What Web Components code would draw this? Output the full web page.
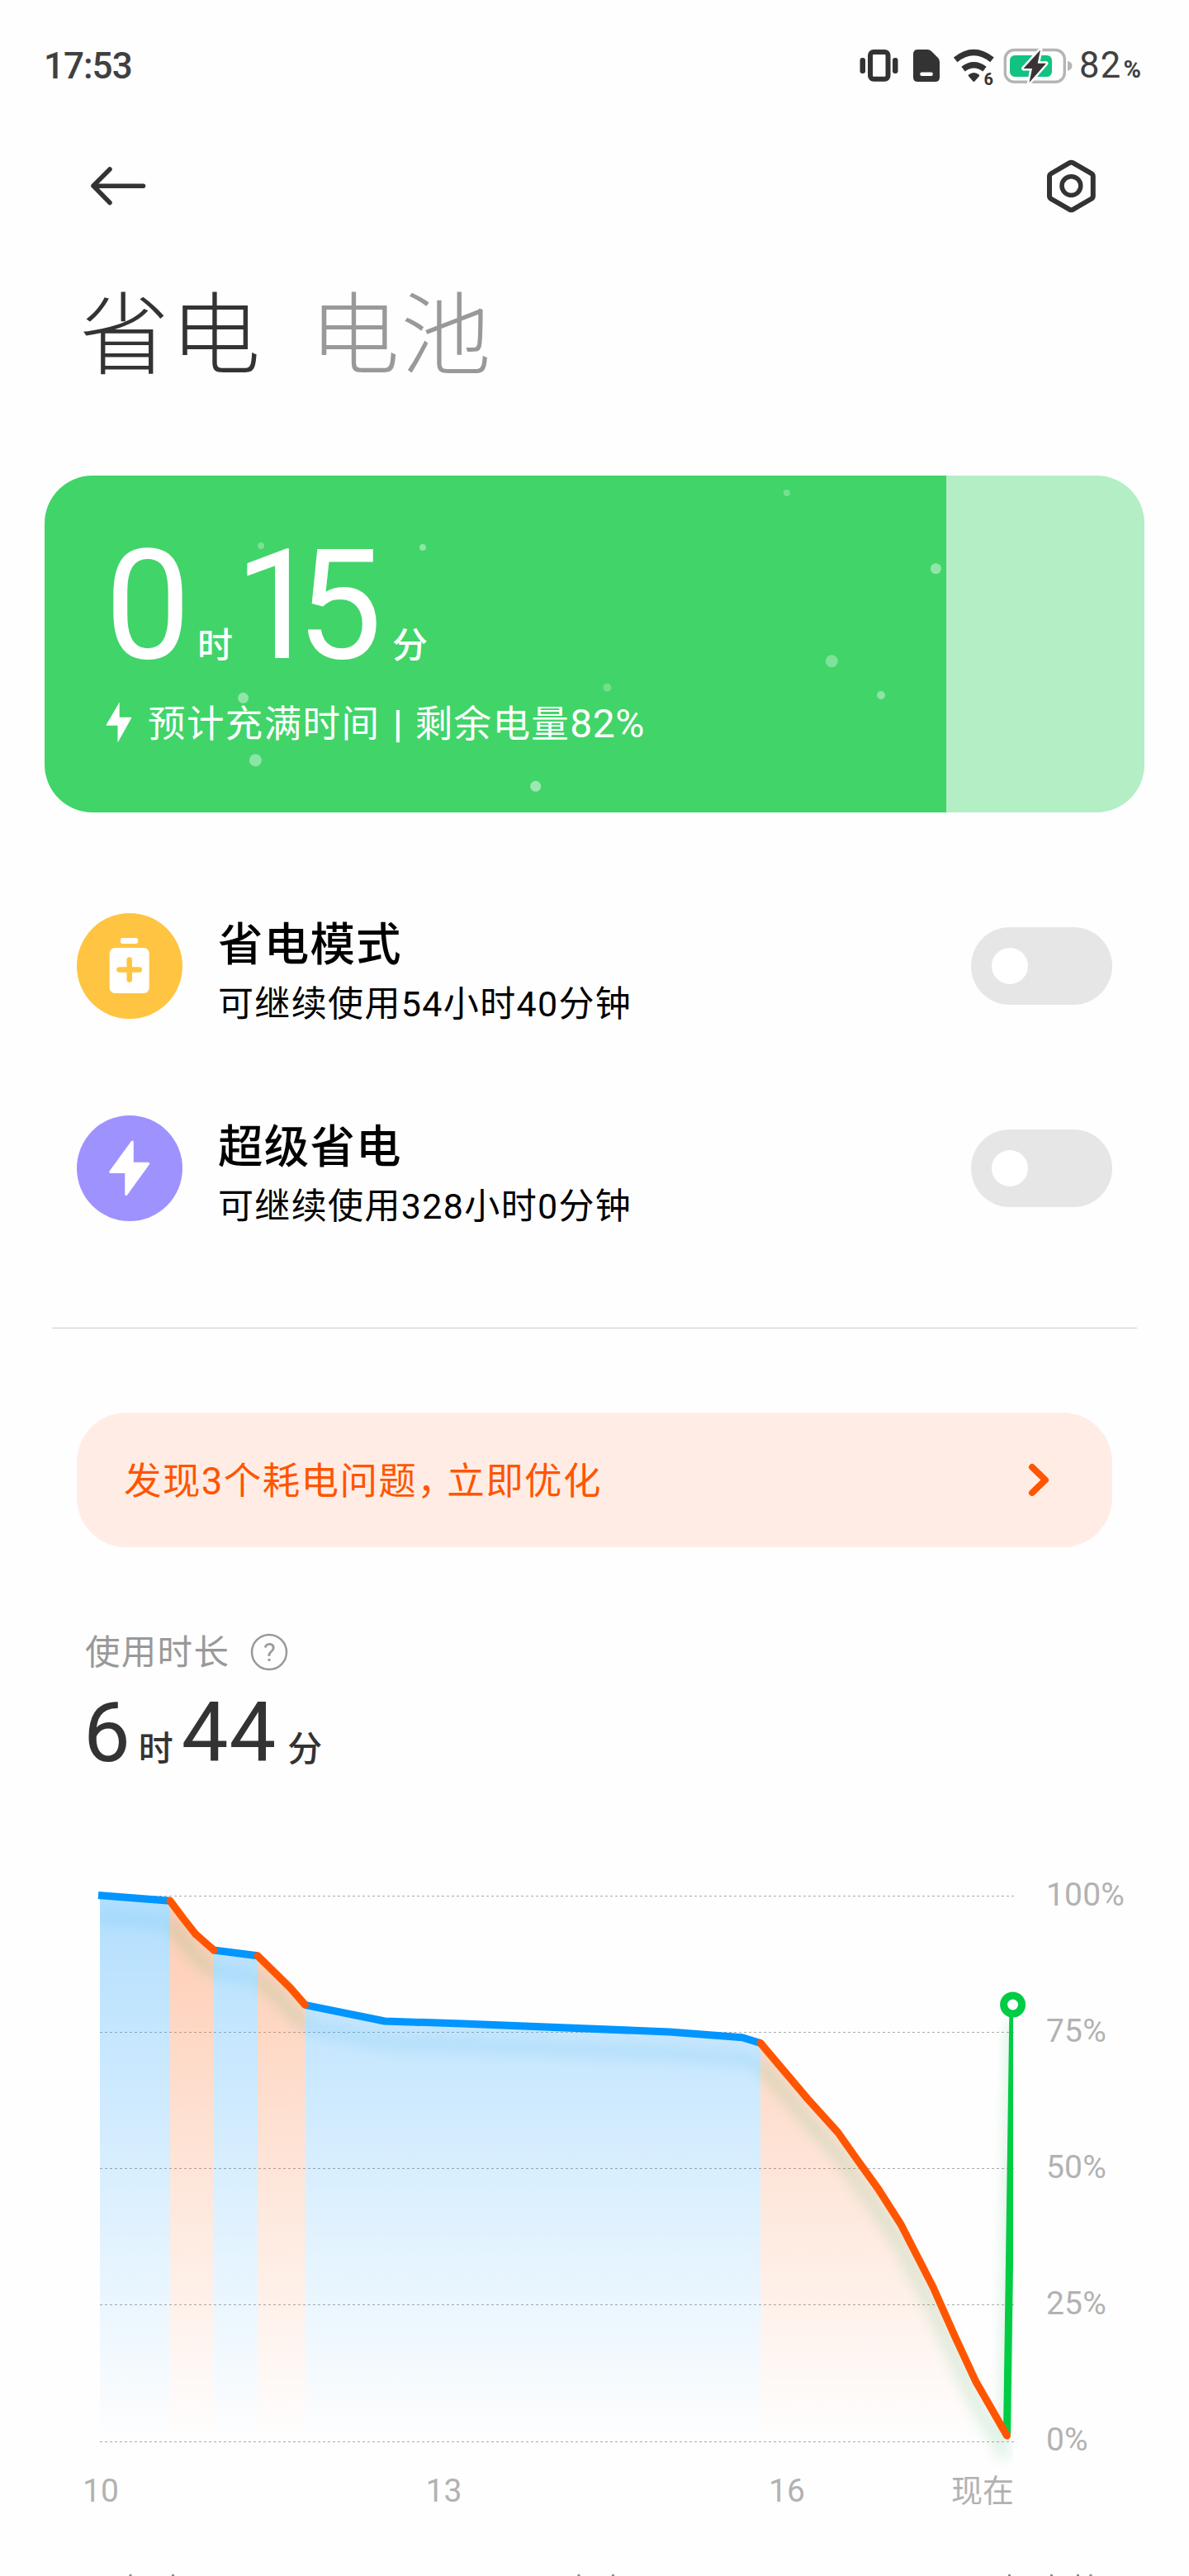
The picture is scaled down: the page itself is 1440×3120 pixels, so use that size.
<!DOCTYPE html>
<html lang="zh-CN">
<head>
<meta charset="UTF-8">
<title>省电</title>
<style>
    body {
        margin: 0;
        background: #fefefe;
        color: #333;
        font-family: Roboto, "Noto Sans CJK SC", sans-serif;
    }
</style>
</head>
<body>
<battery-page></battery-page>

<script>
// Small base class: each element only declares its markup
class BaseElement extends HTMLElement {
    constructor() {
        super();
        this.attachShadow({ mode: 'open' });
    }

    connectedCallback() {
        this.shadowRoot.innerHTML = this.template();
    }
}

class StatusBar extends BaseElement {
    template() {
        return `
            <style>
                :host {
                    display: flex;
                    justify-content: space-between;
                    align-items: center;
                    height: 159px;
                    padding: 0 58px 0 53px;
                }
                .time { font-size: 44px; font-weight: 500; line-height: 60px; letter-spacing: -1px; color: #404040; }
                .icons { display: flex; align-items: center; height: 60px; }
                svg { display: block; }
                .sim { margin-left: 18px; }
                .wifi { margin-left: 17px; }
                .battery { margin-left: 9px; }
                .level { display: flex; align-items: baseline; margin-left: 8px; font-size: 43.500px; line-height: 60px; letter-spacing: 1.300px; color: #404040; }
                .level small { margin-left: 2px; font-size: 29px; line-height: 40px; font-weight: 700; letter-spacing: 0; }
            </style>
            <span class="time">${this.getAttribute('time')}</span>
            <div class="icons">
                <svg width="47" height="46" viewBox="1039 56 47 46" fill="#333">
                    <rect x="1052" y="62" width="21.5" height="32.7" rx="4" fill="none" stroke="#333" stroke-width="6"/>
                    <rect x="1039.5" y="69" width="6.5" height="19" rx="3"/>
                    <rect x="1079" y="69" width="6.5" height="19" rx="3"/>
                </svg>
                <svg class="sim" width="32" height="46" viewBox="1104 56 32 46">
                    <path fill="#333" d="M1109.500 59H1121q3 0 5 2l8 8q2 2 2 5v18.500q0 5.500-5.500 5.500h-21q-5.500 0-5.500-5.500v-28q0-5.500 5.500-5.500z"/>
                    <rect x="1112.300" y="86.500" width="15.500" height="4.500" rx="2" fill="#fff"/>
                </svg>
                <svg class="wifi" width="51" height="60" viewBox="1153 49 51 60">
                    <g fill="none" stroke="#333" stroke-width="7.200">
                        <path d="M1155.200 71.400Q1177.300 53.600 1199.500 71.400"/>
                        <path d="M1164.500 82.600Q1177.500 72.800 1190.500 82.600"/>
                    </g>
                    <path fill="#333" d="M1171 89.500q6.400-5 12.900 0q.6 1-.2 2l-5 5.800q-1.300 1.200-2.500 0l-5-5.800q-.8-1-.2-2z"/>
                    <text x="1189.600" y="101.600" font-size="20" font-weight="700" fill="#333">6</text>
                </svg>
                <svg class="battery" width="84" height="46" viewBox="1213 56 84 46">
                    <rect x="1215.300" y="59.500" width="72" height="38.700" rx="11" fill="none" stroke="#b5b5b5" stroke-width="3.400"/>
                    <path fill="#b5b5b5" d="M1291 72.700q5.500 1.500 5.500 6t-5.500 6z"/>
                    <rect x="1221" y="66" width="51" height="26" rx="6" fill="#12c281"/>
                    <path d="M1258 59.500L1237.500 82H1248L1244.500 99L1265 75.700H1254.700z" fill="#3a3335" stroke="#fff" stroke-width="5" stroke-linejoin="round" paint-order="stroke"/>
                </svg>
                <span class="level">${this.getAttribute('level')}<small>%</small></span>
            </div>
        `;
    }
}

class NavBar extends BaseElement {
    template() {
        return `
            <style>
                :host {
                    display: flex;
                    justify-content: space-between;
                    align-items: center;
                    height: 131px;
                    padding: 0 109px 0 108px;
                }
                svg { display: block; fill: none; stroke: #333; }
            </style>
            <svg width="70" height="50" viewBox="108 200 70 50" stroke-width="5.500" stroke-linecap="round" stroke-linejoin="round">
                <path d="M133 205L113 225L133 245.500M113 225.300H173.500"/>
            </svg>
            <svg width="68" height="68" viewBox="1263 190.500 68 68" stroke-width="6" stroke-linejoin="round">
                <path d="M1295.500 196.700q1.900-1 3.800 0l22.500 13q2 1.200 2 3.500v23.600q0 2.300-2 3.500l-22.500 13q-1.900 1-3.800 0l-22.500-13q-2-1.200-2-3.500v-23.600q0-2.300 2-3.500z"/>
                <circle cx="1297.400" cy="224.600" r="11.400" stroke-width="5.500"/>
            </svg>
        `;
    }
}

class TabTitle extends BaseElement {
    template() {
        return `
            <style>
                :host {
                    display: flex;
                    gap: 58px;
                    height: 286px;
                    padding-left: 96px;
                    box-sizing: border-box;
                    font-size: 109px;
                    font-weight: 300;
                    line-height: 237px;
                    letter-spacing: 1.500px;
                }
                ::slotted(:not([active])) { color: #999; }
            </style>
            <slot></slot>
        `;
    }
}

class ChargeCard extends BaseElement {
    template() {
        // Floating bubbles: x, y, radius, opacity
        const bubbles = [
            [262, 85, 4, .3], [458, 87, 4, .4], [681.4, 256.7, 5, .25], [240.6, 269.3, 6.500, .42],
            [255.4, 344.7, 7.500, .4], [594.7, 376.3, 6.500, .48], [898.8, 21, 4, .28],
            [1079.4, 112.7, 6.500, .42], [953.3, 224.7, 7.500, .33], [1013, 266, 5, .4]
        ];
        return `
            <style>
                :host {
                    display: block;
                    position: relative;
                    box-sizing: border-box;
                    height: 408px;
                    margin: 0 54px;
                    padding: 65px 0 0 73px;
                    border-radius: 58px;
                    color: #fff;
                    background: linear-gradient(to right, #41d469 ${this.getAttribute('level')}%, #b3eec5 0);
                }
                .bubbles { position: absolute; inset: 0; }
                .time { display: flex; align-items: baseline; height: 185px; line-height: 185px; font-size: 185px; }
                .time span { font-size: 43px; font-weight: 500; }
                .hour { margin: 0 2px 0 8px; }
                .minute { margin-left: 12px; }
                .one { font-style: normal; letter-spacing: -29px; }
                .info { display: flex; align-items: center; gap: 20px; height: 60px; margin-top: 21px; line-height: 60px; font-size: 45.500px; letter-spacing: 1.400px; }
                .info svg { display: block; margin-top: -4px; }
                .info b { margin: 0 1px 0 3px; font-weight: 700; }
                .info .percent { font-size: 48px; letter-spacing: 0.500px; }
            </style>
            <svg class="bubbles" width="1332" height="408" fill="#fff">
                ${bubbles.map(([x, y, r, o]) => `<circle cx="${x}" cy="${y}" r="${r}" opacity="${o}"/>`).join('')}
            </svg>
            <div class="time">0<span class="hour">时</span><i class="one">1</i>5<span class="minute">分</span></div>
            <div class="info">
                <svg width="32" height="50" viewBox="127 849 32 50" fill="#fff">
                    <path d="M144.700 849.500V867.800H158.500q1 0 .6 1L142.500 898.500V877.800H129.300q-1 0-.6-1z"/>
                </svg>
                <div>预计充满时间 <b>|</b> 剩余电量<span class="percent">${this.getAttribute('level')}%</span></div>
            </div>
        `;
    }
}

class ModeRow extends BaseElement {
    template() {
        return `
            <style>
                :host {
                    display: flex;
                    align-items: center;
                    height: 128px;
                    margin: 0 93px;
                    color: #000;
                }
                .icon { width: 128px; height: 128px; border-radius: 50%; background: ${this.getAttribute('color')}; }
                .text { flex: 1; margin-left: 43px; padding-top: 14px; }
                .title { height: 74px; line-height: 74px; font-size: 54.500px; font-weight: 500; letter-spacing: 1.200px; }
                .sub { height: 62px; line-height: 62px; margin-top: 4px; font-size: 43px; letter-spacing: 1.350px; }
                .switch { box-sizing: border-box; width: 171px; height: 94px; padding: 25px; border-radius: 47px; background: #e6e6e6; }
                .knob { width: 44px; height: 44px; border-radius: 50%; background: #fff; }
            </style>
            <div class="icon"><slot name="icon"></slot></div>
            <div class="text">
                <div class="title">${this.getAttribute('title-text')}</div>
                <div class="sub"><slot></slot></div>
            </div>
            <div class="switch"><div class="knob"></div></div>
        `;
    }
}

class TipBanner extends BaseElement {
    template() {
        return `
            <style>
                :host {
                    display: flex;
                    justify-content: space-between;
                    align-items: center;
                    height: 163px;
                    margin: 0 93px;
                    padding: 0 75px 0 57px;
                    box-sizing: border-box;
                    border-radius: 60px;
                    background: #ffede5;
                    color: #ff5500;
                    font-size: 45.500px;
                    letter-spacing: 1.400px;
                    line-height: 60px;
                }
                div { padding-top: 4px; }
                svg { display: block; }
            </style>
            <div><slot></slot></div>
            <svg width="28" height="44" viewBox="1244 1771 28 44" fill="none" stroke="#ff5500" stroke-width="8" stroke-linecap="round" stroke-linejoin="round">
                <path d="M1250 1777L1266 1792.500L1250 1808"/>
            </svg>
        `;
    }
}

class UsageTime extends BaseElement {
    template() {
        return `
            <style>
                :host { display: block; margin-left: 103px; }
                .label { display: flex; align-items: center; gap: 25px; height: 50px; line-height: 50px; font-size: 42.500px; letter-spacing: 1.300px; color: #999; }
                .label svg { display: block; margin-top: -3px; }
                .value { display: flex; align-items: baseline; height: 101px; margin: 21px 0 0 -2px; line-height: 101px; font-size: 101px; letter-spacing: 1px; }
                .value span { font-size: 42px; font-weight: 500; }
                .hour { margin: 0 9px 0 9px; }
                .minute { margin-left: 13px; }
            </style>
            <div class="label">使用时长
                <svg width="46" height="46" viewBox="0 0 46 46">
                    <circle cx="23" cy="23" r="21" fill="none" stroke="#999" stroke-width="2.500"/>
                    <text x="23.300" y="34" font-size="31" letter-spacing="0" text-anchor="middle" fill="#999">?</text>
                </svg>
            </div>
            <div class="value">6<span class="hour">时</span>44<span class="minute">分</span></div>
        `;
    }
}

class BatteryChart extends BaseElement {
    template() {
        const blue = '#0095ff', orange = '#ff5500', green = '#00cc44';
        const bottom = 2957;
        const segments = [
            { color: blue, points: [[119, 2295.500], [206, 2302.300]] },
            { color: blue, points: [[259, 2362], [312, 2368.700]] },
            { color: blue, points: [[369.500, 2428.300], [466, 2448], [560, 2451], [811, 2461], [898.800, 2467.700], [921, 2474.500]] },
            { color: orange, points: [[206, 2302.300], [221.700, 2323.300], [237, 2342.700], [259, 2362]] },
            { color: orange, points: [[312, 2368.700], [351.700, 2407.700], [369.500, 2428.300]] },
            { color: orange, points: [[921, 2474.500], [978, 2542], [1015, 2583], [1037.600, 2615], [1063.500, 2651], [1091, 2694], [1130, 2770], [1156, 2828.800], [1182, 2884.800], [1219.500, 2950]] }
        ];
        const fill = s => {
            const first = s.points[0], last = s.points[s.points.length - 1];
            const gradient = s.color === blue ? 'blueFill' : 'orangeFill';
            return `<polygon points="${s.points.join(' ')} ${last[0]},${bottom} ${first[0]},${bottom}" fill="url(#${gradient})"/>`;
        };
        const shadow = s => `<polyline points="${s.points.join(' ')}" stroke="${s.color === blue ? '#0092d8' : '#30b060'}" stroke-opacity="${s.color === blue ? .6 : 1}"/>`;
        const line = s => `<polyline points="${s.points.join(' ')}" stroke="${s.color}" stroke-linecap="${s.color === blue ? 'butt' : 'round'}"/>`;
        const grid = [2296.500, 2461.500, 2626.500, 2791.500, 2957.500];

        return `
            <style>
                :host { display: grid; grid-template-columns: 1107px auto; column-gap: 39px; margin-left: 121px; font-size: 39px; color: #b2b2b2; }
                svg { display: block; overflow: visible; }
                .levels { display: flex; flex-direction: column; justify-content: space-between; height: 700px; padding-top: 1px; line-height: 40px; letter-spacing: 0.200px; }
                .hours { display: grid; grid-template-columns: 415.500px 415.500px 1fr auto; margin-top: 17px; line-height: 50px; }
                .hours span { margin-left: -21px; }
                .hours .now { margin: 0; font-size: 38px; }
            </style>
            <svg width="1107" height="700" viewBox="121 2274 1107 700">
                <defs>
                    <linearGradient id="blueFill" gradientUnits="userSpaceOnUse" x1="0" y1="2296" x2="0" y2="2957">
                        <stop offset="0" stop-color="#0095ff" stop-opacity=".3"/>
                        <stop offset="1" stop-color="#0095ff" stop-opacity="0"/>
                    </linearGradient>
                    <linearGradient id="orangeFill" gradientUnits="userSpaceOnUse" x1="0" y1="2296" x2="0" y2="2957">
                        <stop offset="0" stop-color="#ff5500" stop-opacity=".3"/>
                        <stop offset="1" stop-color="#ff5500" stop-opacity="0"/>
                    </linearGradient>
                    <filter id="blur" filterUnits="userSpaceOnUse" x="80" y="2240" width="1200" height="800">
                        <feGaussianBlur stdDeviation="8"/>
                    </filter>
                    <clipPath id="plot"><rect x="121" y="2260" width="1106" height="740"/></clipPath>
                </defs>
                <path d="${grid.map(y => `M121 ${y}H1228`).join('')}" stroke="#aaa" stroke-dasharray="3 3"/>
                <g clip-path="url(#plot)">
                    ${segments.map(fill).join('')}
                    <g filter="url(#blur)" fill="none" stroke-width="16" opacity=".16" transform="translate(0 26)">
                        ${segments.map(shadow).join('')}
                    </g>
                    <path d="M1218 2950L1226 2450" stroke="#30b060" stroke-width="12" opacity=".2" filter="url(#blur)"/>
                </g>
                <g fill="none" stroke-width="9" stroke-linejoin="round">
                    <path d="M1219.500 2948L1227 2430" stroke="${green}" clip-path="url(#plot)"/>
                    ${segments.map(line).join('')}
                </g>
                <circle cx="1226.600" cy="2428" r="11" fill="#fff" stroke="${green}" stroke-width="9"/>
            </svg>
            <div class="levels">
                <span>100%</span><span>75%</span><span>50%</span><span>25%</span><span>0%</span>
            </div>
            <div class="hours">
                <span>10</span><span>13</span><span>16</span><span class="now">现在</span>
            </div>
        `;
    }
}

// Top edge of the summary row that continues below the fold
class SummaryPeek extends BaseElement {
    template() {
        const marks = [156.500, 208, 699.500, 741, 1221, 1272, 1304, 1319.500];
        return `
            <style>
                :host { display: block; height: 2px; margin-top: auto; }
                svg { display: block; }
            </style>
            <svg width="1440" height="2" fill="#888">
                ${marks.map(x => `<rect x="${x}" width="3" height="2"/>`).join('')}
            </svg>
        `;
    }
}

class BatteryPage extends BaseElement {
    template() {
        return `
            <style>
                :host { display: flex; flex-direction: column; width: 1440px; height: 3120px; overflow: hidden; }
                mode-row { margin-top: 122px; }
                mode-row + mode-row { margin-top: 117px; }
                mode-row svg { display: block; }
                hr { flex: none; width: 1314px; height: 1px; margin: 129px auto 102px; border: 0; background: #ccc; }
                .comma { letter-spacing: -9.500px; }
                usage-time { margin-top: 103px; }
                battery-chart { margin-top: 125px; }
            </style>
            <status-bar time="17:53" level="82"></status-bar>
            <nav-bar></nav-bar>
            <tab-title><span active>省电</span><span>电池</span></tab-title>
            <charge-card level="82"></charge-card>
            <mode-row color="#ffc441" title-text="省电模式">
                <svg slot="icon" width="128" height="128" viewBox="93 1106 128 128" fill="#fff">
                    <rect x="145.800" y="1136" width="21.400" height="7" rx="3"/>
                    <rect x="132.700" y="1148" width="48" height="55" rx="6.500"/>
                    <path d="M156.700 1162.500V1186.500M144.500 1174.500H168.800" stroke="#ffc441" stroke-width="6.500" stroke-linecap="round"/>
                </svg>
                可继续使用54小时40分钟
            </mode-row>
            <mode-row color="#9e92ff" title-text="超级省电">
                <svg slot="icon" width="128" height="128" viewBox="93 1351 128 128" fill="#fff" stroke="#fff" stroke-width="3" stroke-linejoin="round">
                    <path d="M160.300 1383V1409.300H179.700L152.800 1446.500V1419.500H133.700z"/>
                </svg>
                可继续使用328小时0分钟
            </mode-row>
            <hr>
            <tip-banner>发现3个耗电问题<span class="comma">，</span>立即优化</tip-banner>
            <usage-time></usage-time>
            <battery-chart></battery-chart>
            <summary-peek></summary-peek>
        `;
    }
}

customElements.define('status-bar', StatusBar);
customElements.define('nav-bar', NavBar);
customElements.define('tab-title', TabTitle);
customElements.define('charge-card', ChargeCard);
customElements.define('mode-row', ModeRow);
customElements.define('tip-banner', TipBanner);
customElements.define('usage-time', UsageTime);
customElements.define('battery-chart', BatteryChart);
customElements.define('summary-peek', SummaryPeek);
customElements.define('battery-page', BatteryPage);
</script>
</body>
</html>
